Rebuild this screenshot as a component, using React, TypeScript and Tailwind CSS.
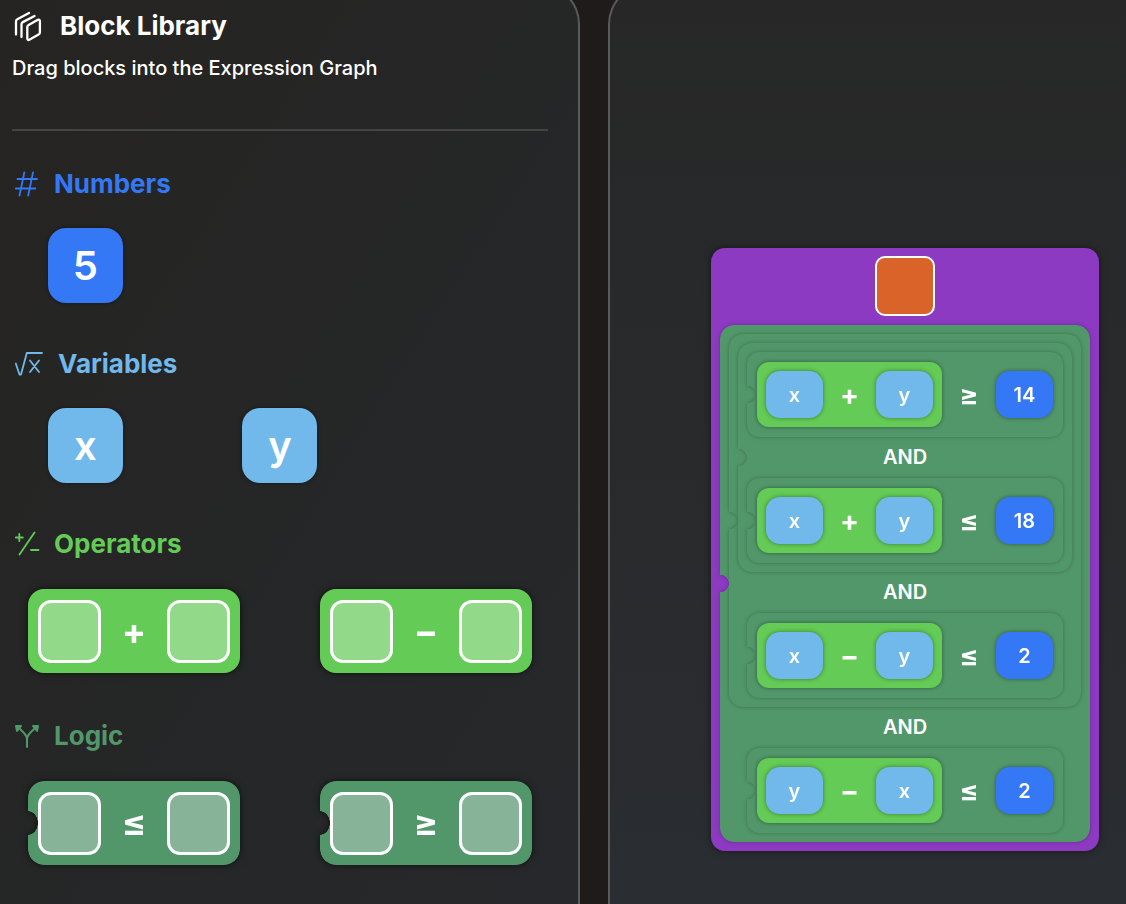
import type { ReactNode } from "react";

type Kind = "number" | "variable";

type Comparison = {
  left: string;
  operator: string;
  right: string;
  relation: string;
  value: string;
};

const comparisons: Comparison[] = [
  { left: "x", operator: "+", right: "y", relation: "≥", value: "14" },
  { left: "x", operator: "+", right: "y", relation: "≤", value: "18" },
  { left: "x", operator: "−", right: "y", relation: "≤", value: "2" },
  { left: "y", operator: "−", right: "x", relation: "≤", value: "2" },
];

function classNames(...classes: (string | false | undefined)[]) {
  return classes.filter(Boolean).join(" ");
}

const StackIcon = () => (
  <svg width="32" height="32" viewBox="0 0 32 32" fill="none" stroke="currentColor" strokeWidth="2.3" strokeLinecap="round" strokeLinejoin="round" aria-hidden="true">
    <path d="M4 24.5V11.400c0-1 .5-1.800 1.300-2.200L17 3" />
    <path d="M9.500 27V14.300c0-1 .5-1.800 1.300-2.200L22.500 6" />
    <path d="M15.300 17.200c0-1 .5-1.800 1.300-2.200l9.300-5.200c1-.5 2 0 2 1.200v11.300c0 1-.5 1.800-1.300 2.200l-9.300 5.300c-1 .5-2 0-2-1.200z" />
  </svg>
);

const HashIcon = () => (
  <svg width="30" height="30" viewBox="0 0 30 30" fill="none" stroke="currentColor" strokeWidth="1.8" strokeLinecap="round" aria-hidden="true">
    <path d="M12.300 3.500 7.500 26.500M21 3.500 16.200 26.500M5.500 10H25M3.800 19.500H23.300" />
  </svg>
);

const RootIcon = () => (
  <svg width="34" height="30" viewBox="0 0 34 30" fill="none" stroke="currentColor" strokeWidth="1.8" strokeLinecap="round" strokeLinejoin="round" aria-hidden="true">
    <path d="M3.800 14.500 7.500 25.500h1.500L14.800 4H30M18 11.500l9 11.500M27 11.500l-9 11.500" />
  </svg>
);

const PlusMinusIcon = () => (
  <svg width="30" height="30" viewBox="0 0 30 30" fill="none" stroke="currentColor" strokeWidth="1.8" strokeLinecap="round" aria-hidden="true">
    <path d="M3.800 8.500h7M7.300 5v7M22.500 3.500 7.500 25.500M19 21h7.500" />
  </svg>
);

const BranchIcon = () => (
  <svg width="30" height="30" viewBox="0 0 30 30" fill="none" stroke="currentColor" strokeWidth="2" strokeLinecap="round" strokeLinejoin="round" aria-hidden="true">
    <path d="M15 26v-7c0-3-1-5-3-7L6 6M15 19c0-3 1-5 3-7l6-6" />
    <path d="M4 5h5L5 10zM26 5h-5l4 5z" fill="currentColor" />
  </svg>
);

/* Single value block */
const Tile = ({ kind, large, children }: { kind: Kind; large?: boolean; children: ReactNode }) => (
  <div
    className={classNames(
      "flex items-center justify-center font-semibold shadow-[0_0_4px_rgba(0,0,0,0.4)]",
      kind === "number" ? "bg-[#3478f6]" : "bg-[#71b9ea]",
      large ? "h-[75px] w-[75px] rounded-[18px] text-[40px] leading-[48px]" : "h-[47px] w-[57px] rounded-[14px] text-xl leading-6"
    )}
  >
    {children}
  </div>
);

const Slot = ({ className }: { className: string }) => (
  <div className={classNames("h-[63px] w-[63px] rounded-[13px] border-3 border-white", className)} />
);

/* Green shape with a round notch in the middle of its left edge */
const LogicShape = ({ className, children }: { className?: string; children: ReactNode }) => (
  <div className="drop-shadow-[0_0_2px_rgba(0,0,0,0.25)]">
    <div
      className={classNames(
        "flex items-center bg-[#52976a] [mask-image:radial-gradient(circle_9px_at_0_50%,transparent_96%,black)]",
        className
      )}
    >
      {children}
    </div>
  </div>
);

const LibraryBlock = ({ symbol, logic }: { symbol: string; logic?: boolean }) => (
  <div className="drop-shadow-[0_0_3px_rgba(0,0,0,0.6)]">
    <div
      draggable
      className={classNames(
        "flex h-[84px] w-[212px] items-center justify-between rounded-2xl px-[10px]",
        logic
          ? "bg-[#52976a] [mask-image:radial-gradient(10px_12px_at_0_50%,transparent_96%,black)]"
          : "bg-[#63cb56]"
      )}
    >
      <Slot className={logic ? "bg-[#87b499]" : "bg-[#92d989]"} />
      <span className="text-4xl leading-9 font-bold">{symbol}</span>
      <Slot className={logic ? "bg-[#87b499]" : "bg-[#92d989]"} />
    </div>
  </div>
);

const ComparisonBlock = ({ item }: { item: Comparison }) => (
  <LogicShape className="rounded-xl p-[10px]">
    <div className="flex items-center rounded-xl bg-[#63cb56] p-[9px] shadow-[0_0_4px_rgba(0,0,0,0.4)]">
      <Tile kind="variable">{item.left}</Tile>
      <span className="w-[53px] text-center text-[28px] leading-7 font-bold">{item.operator}</span>
      <Tile kind="variable">{item.right}</Tile>
    </div>
    <span className="w-[54px] text-center text-[28px] leading-7 font-bold">{item.relation}</span>
    <Tile kind="number">{item.value}</Tile>
  </LogicShape>
);

const AndBlock = ({ first, second }: { first: ReactNode; second: ReactNode }) => (
  <LogicShape className="flex-col rounded-[14px] p-[9px]">
    {first}
    <span className="text-xl leading-[41px] font-semibold">AND</span>
    {second}
  </LogicShape>
);

const Section = ({ icon, title, color, children, wide }: { icon: ReactNode; title: string; color: string; children: ReactNode; wide?: boolean }) => (
  <section>
    <h2 className={classNames("flex items-center gap-3 text-[26px] leading-[30px] font-bold", color)}>
      {icon}
      {title}
    </h2>
    <div className={classNames("grid justify-items-center gap-x-12", wide ? "mt-[30px] mb-0.5 grid-cols-2" : "mt-[29px] grid-cols-3")}>
      {children}
    </div>
  </section>
);

const App = () => {
  const [a, b, c, d] = comparisons.map((item, i) => <ComparisonBlock key={i} item={item} />);

  return (
    <div className="grid h-screen grid-cols-[580fr_518fr] gap-7 overflow-hidden bg-[#1f1b1a] font-['Inter',sans-serif] text-white">
      <aside className="-mt-4 rounded-tr-[40px] border-t-2 border-r-2 border-[#5a5a5a] bg-linear-to-br from-[#252422] to-[#26282b] pt-[22px] pr-[30px] pl-3">
        <h1 className="flex items-center gap-4 text-[26px] leading-9 font-bold">
          <StackIcon />
          Block Library
        </h1>
        <p className="mt-[10px] text-xl leading-7 font-medium">Drag blocks into the Expression Graph</p>
        <hr className="mt-[47px] border-t-2 border-[#444444]" />

        <div className="mt-[38px] flex flex-col gap-[46px]">
          <Section icon={<HashIcon />} title="Numbers" color="text-[#3478f6]">
            <Tile kind="number" large>5</Tile>
          </Section>
          <Section icon={<RootIcon />} title="Variables" color="text-[#71b9ea]">
            <Tile kind="variable" large>x</Tile>
            <Tile kind="variable" large>y</Tile>
          </Section>
          <Section icon={<PlusMinusIcon />} title="Operators" color="text-[#63cb56]" wide>
            <LibraryBlock symbol="+" />
            <LibraryBlock symbol="−" />
          </Section>
          <Section icon={<BranchIcon />} title="Logic" color="text-[#52976a]" wide>
            <LibraryBlock symbol="≤" logic />
            <LibraryBlock symbol="≥" logic />
          </Section>
        </div>
      </aside>

      <main className="-mt-4 rounded-tl-[40px] border-t-2 border-l-2 border-[#5a5a5a] bg-linear-to-b from-[#272727] to-[#2a2d31] pt-[262px] pl-[101px]">
        <div className="flex w-fit flex-col items-center rounded-[14px] bg-[#8c3ac2] px-[9px] pt-2 pb-[9px] shadow-[0_0_6px_rgba(0,0,0,0.5)]">
          <div className="mb-[9px] h-[60px] w-[60px] rounded-[10px] border-2 border-white bg-[#d96329]" />
          <AndBlock first={<AndBlock first={<AndBlock first={a} second={b} />} second={c} />} second={d} />
        </div>
      </main>
    </div>
  );
};

export default App;
